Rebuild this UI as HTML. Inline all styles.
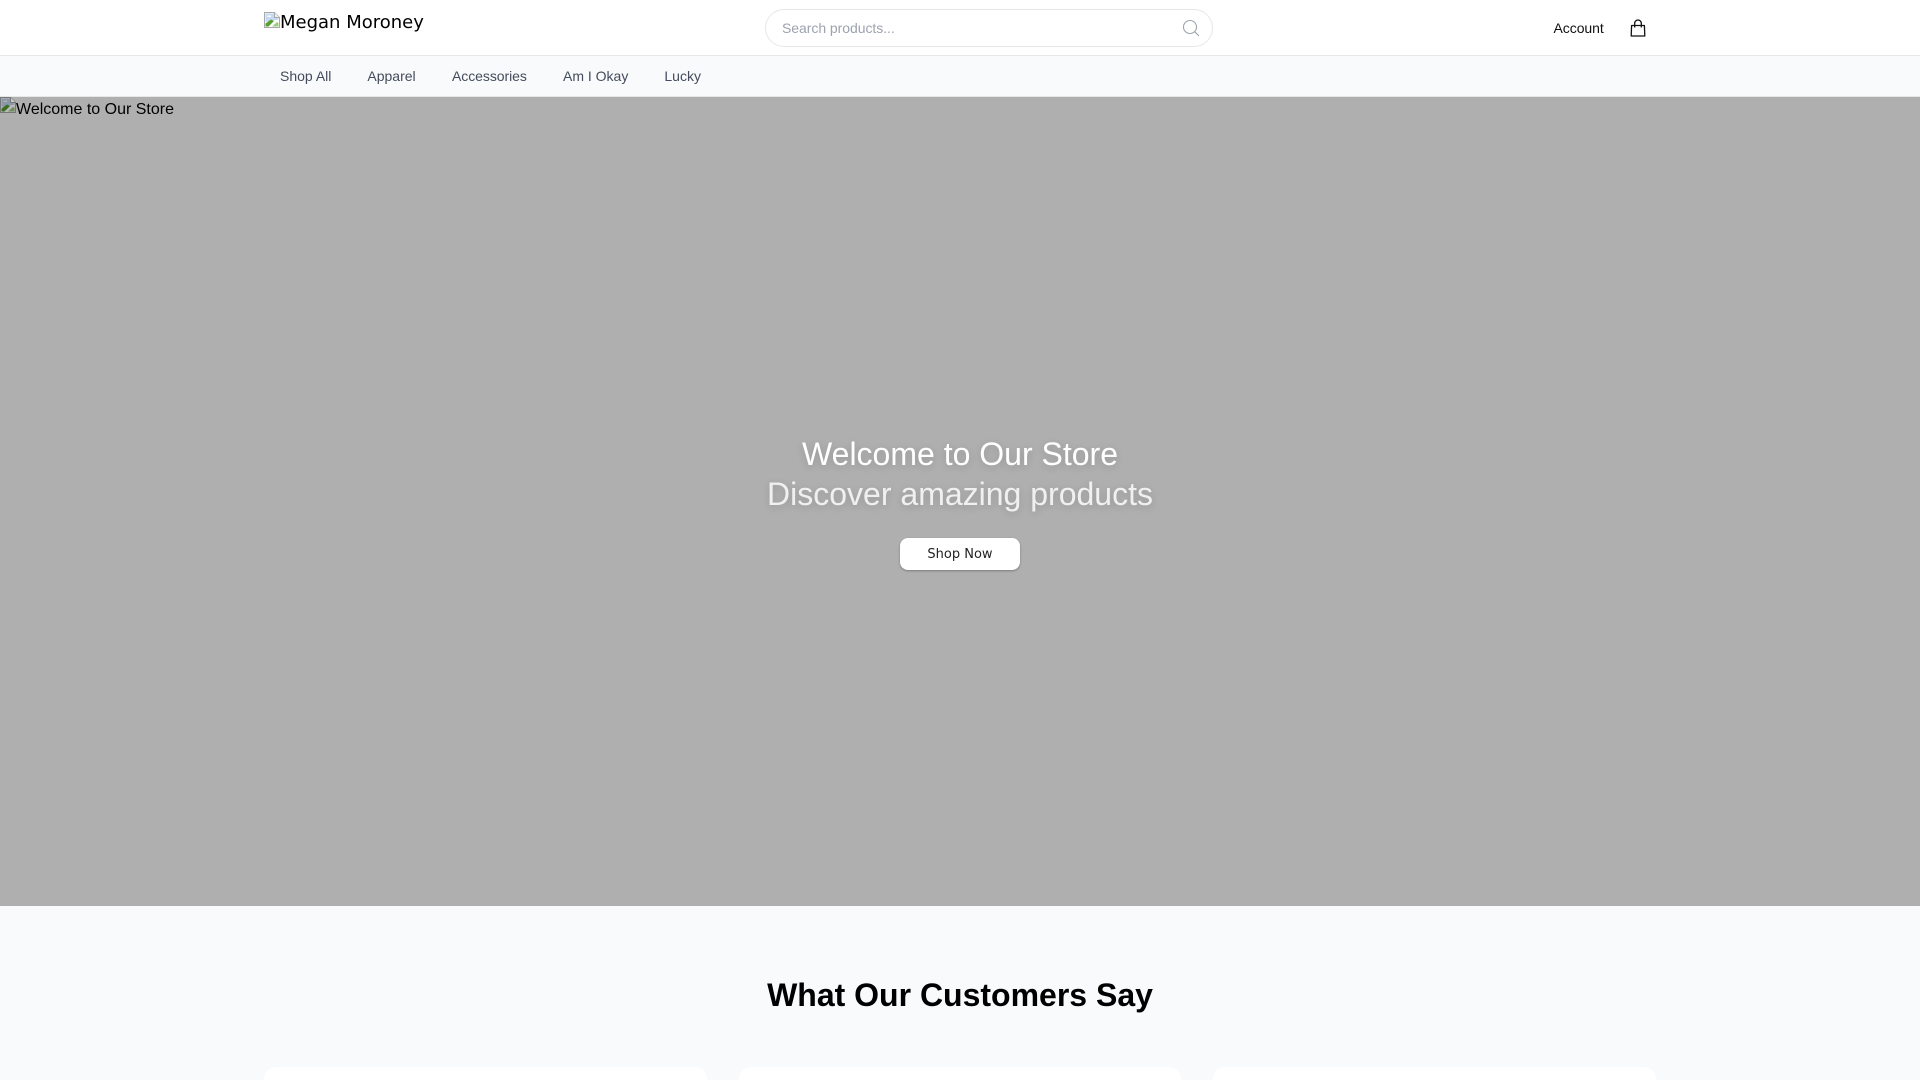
<!DOCTYPE html>
<html lang="en">
<head>
<meta charset="utf-8">
<title>Megan Moroney</title>
<style>
*{box-sizing:border-box;margin:0;padding:0}
html,body{width:1920px;height:1080px;overflow:hidden;background:#f9fafb}
body{font-family:"Liberation Sans",sans-serif;position:relative}
.a{position:absolute;white-space:nowrap}
.header{left:0;top:0;width:1920px;height:56px;background:#fff;border-bottom:1px solid #e5e7eb}
.nav{left:0;top:56px;width:1920px;height:41px;background:#f9fafb;border-bottom:1px solid #e5e7eb}
.navl{top:68px;font-size:14px;line-height:16px;color:#434c5c}
.logo{left:280px;top:11px;font-family:"DejaVu Sans",sans-serif;font-size:18px;line-height:24px;color:#000}
.search{left:765px;top:9px;width:448px;height:38px;border:1px solid #e5e7eb;border-radius:20px;background:#fff}
.ph{left:782px;top:20px;font-size:14px;line-height:16px;letter-spacing:-.05px;color:#9ca3af}
.hero{left:0;top:97px;width:1920px;height:809px;background:#afafaf}
.alt{left:16px;top:101px;font-size:16px;line-height:18px;color:#000}
.h{left:0;width:1920px;text-align:center;font-size:32px;line-height:40px;color:#fff;text-shadow:0 2px 8px rgba(0,0,0,.15)}
.btn{left:900px;top:538px;width:120px;height:32px;background:#fff;border-radius:8px;box-shadow:0 1px 2px rgba(0,0,0,.3);text-align:center;font-family:"DejaVu Sans",sans-serif;font-size:13px;line-height:33px;color:#222}
.title{left:0;top:975px;width:1920px;text-align:center;font-size:32px;font-weight:700;line-height:40px;color:#000}
.card{top:1067px;width:442.670px;height:60px;background:#fff;border-radius:12px}
</style>
</head>
<body>
<div class="a header"></div>
<svg class="a" style="left:264px;top:12px" width="16" height="16" viewBox="0 0 16 16"><path d="M.5.5H10.500L15.500 5.500V15.500H.5Z" fill="#fff" stroke="#a8a8a8"/><path d="M10.500.5V5.500H15.500" fill="#eee" stroke="#a8a8a8"/><path d="M1.500 1.500H10V6H14.500V7.500L1.500 10Z" fill="#c5d9f3"/><path d="M3.500 3.500H7V5H3.500Z" fill="#fff"/><path d="M1.500 14.500V11.500L7 7.500L10 9L4.500 14.500Z" fill="#56a02f"/><path d="M8 14.500L13 10L14.500 11V14.500Z" fill="#9ccb82"/></svg>
<div class="a logo">Megan Moroney</div>
<div class="a search"></div>
<div class="a ph">Search products...</div>
<svg class="a" style="left:1182px;top:19px" width="18" height="18" viewBox="0 0 18 18" fill="none" stroke="#9ca3af" stroke-width="1.100"><circle cx="8" cy="8" r="6.500"/><path d="M12.800 12.800L17 17"/></svg>
<div class="a" style="left:1553.500px;top:20px;font-size:14px;line-height:16px;letter-spacing:-.05px;color:#111">Account</div>
<svg class="a" style="left:1630px;top:19px" width="17" height="19" viewBox="0 0 17 19" fill="none" stroke="#111" stroke-width="1.300"><path d="M1.600 6.500H14.400L14.800 17H1.200Z" stroke-linejoin="round"/><path d="M4.700 8.500V4.300A3.300 3.300 0 0 1 11.300 4.300V8.500"/></svg>
<div class="a nav"></div>
<div class="a navl" style="left:280px">Shop All</div>
<div class="a navl" style="left:367.400px">Apparel</div>
<div class="a navl" style="left:452px;letter-spacing:-.06px">Accessories</div>
<div class="a navl" style="left:563px">Am I Okay</div>
<div class="a navl" style="left:664.400px">Lucky</div>
<div class="a hero"></div>
<svg class="a" style="left:0;top:97px" width="16" height="16" viewBox="0 0 16 16"><path d="M.5.5H10.500L15.500 5.500V15.500H.5Z" fill="#b8b8b8" stroke="#777"/><path d="M10.500.5V5.500H15.500" fill="#ccc" stroke="#777"/><path d="M1.500 1.500H10V6H14.500V7.500L1.500 10Z" fill="#8a98aa"/><path d="M3.500 3.500H7V5H3.500Z" fill="#b0b0b0"/><path d="M1.500 14.500V11.500L7 7.500L10 9L4.500 14.500Z" fill="#3c7021"/><path d="M8 14.500L13 10L14.500 11V14.500Z" fill="#6d8e5b"/></svg>
<div class="a alt">Welcome to Our Store</div>
<div class="a h" style="top:434px">Welcome to Our Store</div>
<div class="a h" style="top:474px;color:#f0f0f0">Discover amazing products</div>
<div class="a btn">Shop Now</div>
<div class="a title">What Our Customers Say</div>
<div class="a card" style="left:264px"></div>
<div class="a card" style="left:738.670px"></div>
<div class="a card" style="left:1213.330px"></div>
</body>
</html>
